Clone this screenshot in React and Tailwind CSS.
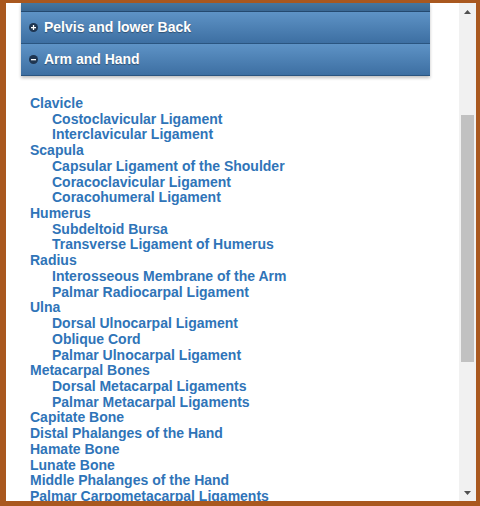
import React from "react";

const items = [
  ["Clavicle", 0],
  ["Costoclavicular Ligament", 1],
  ["Interclavicular Ligament", 1],
  ["Scapula", 0],
  ["Capsular Ligament of the Shoulder", 1],
  ["Coracoclavicular Ligament", 1],
  ["Coracohumeral Ligament", 1],
  ["Humerus", 0],
  ["Subdeltoid Bursa", 1],
  ["Transverse Ligament of Humerus", 1],
  ["Radius", 0],
  ["Interosseous Membrane of the Arm", 1],
  ["Palmar Radiocarpal Ligament", 1],
  ["Ulna", 0],
  ["Dorsal Ulnocarpal Ligament", 1],
  ["Oblique Cord", 1],
  ["Palmar Ulnocarpal Ligament", 1],
  ["Metacarpal Bones", 0],
  ["Dorsal Metacarpal Ligaments", 1],
  ["Palmar Metacarpal Ligaments", 1],
  ["Capitate Bone", 0],
  ["Distal Phalanges of the Hand", 0],
  ["Hamate Bone", 0],
  ["Lunate Bone", 0],
  ["Middle Phalanges of the Hand", 0],
  ["Palmar Carpometacarpal Ligaments", 0],
];

function Toggle({ open }) {
  return (
    <svg width="9" height="9" viewBox="0 0 9 9" className="shrink-0">
      <circle cx="4.5" cy="4.5" r="4.5" fill="#1f3550" />
      <rect x="2" y="4" width="5" height="1.3" fill="#fff" />
      {!open && <rect x="3.85" y="2" width="1.3" height="5" fill="#fff" />}
    </svg>
  );
}

function Header({ label, open }) {
  return (
    <div className="flex h-[32px] items-center gap-[6px] border-b border-[#2a5580] bg-gradient-to-b from-[#5e93c6] to-[#3d6fa2] pl-[8px] text-[14px] font-bold text-white [text-shadow:0_1px_1px_rgba(0,0,0,0.35)]">
      <Toggle open={open} />
      <span>{label}</span>
    </div>
  );
}

export default function App() {
  return (
    <div
      className="flex h-[506px] w-[480px] border-b-[5px] border-l-[6px] border-r-[4px] border-t-[3px] border-[#a9581f] bg-white"
      style={{ fontFamily: '"Liberation Sans", Arial, sans-serif' }}
    >
      <div className="flex-1 overflow-hidden">
        <div className="ml-[15px] mr-[29px] shadow-[0_2px_3px_rgba(0,0,0,0.25)]">
          <div className="h-[9px] border-b border-[#24496f] bg-gradient-to-b from-[#46779f] to-[#3a6793]" />
          <Header label="Pelvis and lower Back" open={false} />
          <Header label="Arm and Hand" open={true} />
        </div>
        <ul className="mt-[20px] pl-[24px] text-[14px] font-bold leading-[15.72px] text-[#2f74b8]">
          {items.map(([t, lvl]) => (
            <li key={t} className={lvl ? "pl-[22px]" : ""}>
              {t}
            </li>
          ))}
        </ul>
      </div>
      <div className="flex w-[17px] flex-col items-center bg-[#f1f1f1]">
        <div className="flex h-[17px] w-full items-center justify-center">
          <svg width="7" height="4" viewBox="0 0 7 4">
            <path d="M0 4 L3.5 0 L7 4 Z" fill="#505050" />
          </svg>
        </div>
        <div className="mt-[95px] h-[247px] w-[13px] bg-[#c1c1c1]" />
        <div className="flex-1" />
        <div className="flex h-[17px] w-full items-center justify-center">
          <svg width="7" height="4" viewBox="0 0 7 4">
            <path d="M0 0 L3.5 4 L7 0 Z" fill="#505050" />
          </svg>
        </div>
      </div>
    </div>
  );
}
